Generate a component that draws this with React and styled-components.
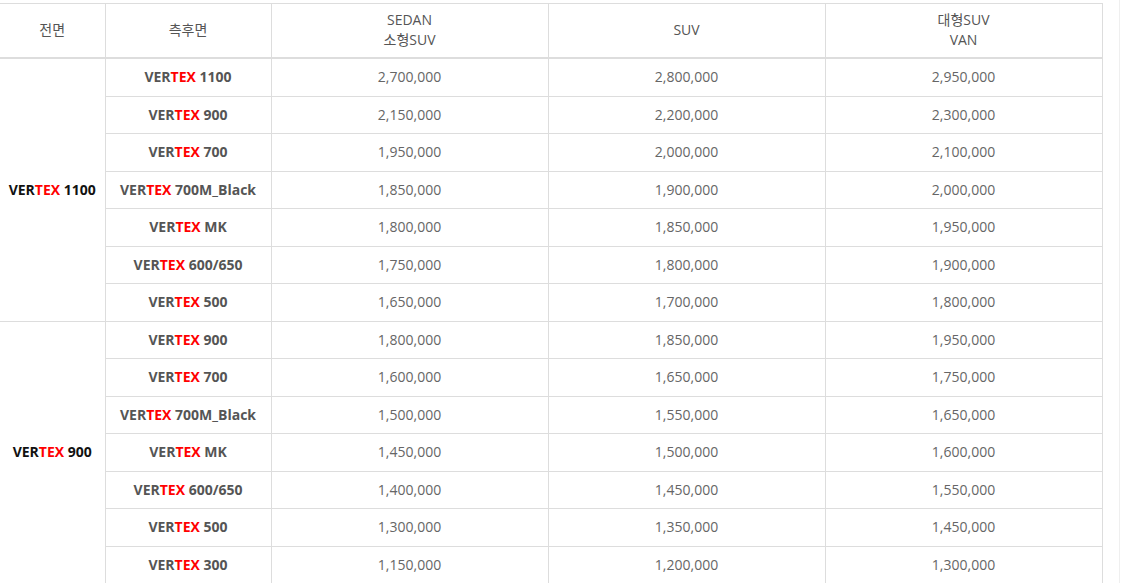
import React from "react";
import styled, { createGlobalStyle } from "styled-components";

const GlobalStyle = createGlobalStyle`
  body {
    margin: 0;
    background: #fff;
    font-family: "Open Sans", "Noto Sans CJK KR", sans-serif;
  }
`;

const Page = styled.div`
  width: 1120px;
  height: 583px;
  padding-top: 3px;
  box-sizing: border-box;
  border-right: 1px solid #efefef;
  overflow: hidden;
`;

const Table = styled.table`
  width: 1102px;
  border-collapse: collapse;
  table-layout: fixed;
  font-size: 14px;
`;

const Th = styled.th`
  font-weight: normal;
  color: #555;
  padding: 6px 0 7px;
  line-height: 20px;
  height: 40px;
  border-top: 1px solid #ddd;
  border-bottom: 2px solid #ddd;
  border-left: ${(p) => (p.$first ? "none" : "1px solid #ddd")};
  border-right: 1px solid #ddd;
  text-align: center;
`;

const Td = styled.td`
  padding: 8px 0;
  line-height: 20.5px;
  text-align: center;
  color: #666;
  border-bottom: 1px solid #ddd;
  border-right: 1px solid #ddd;
  white-space: nowrap;
`;

const FrontCell = styled(Td)`
  font-weight: bold;
  color: #111;
`;

const ModelCell = styled(Td)`
  font-weight: bold;
  color: #555;
`;

const Red = styled.span`
  color: #f00;
`;

const Model = ({ name }) => (
  <>
    VER<Red>TEX</Red> {name}
  </>
);

const groups = [
  {
    front: "1100",
    rows: [
      ["1100", "2,700,000", "2,800,000", "2,950,000"],
      ["900", "2,150,000", "2,200,000", "2,300,000"],
      ["700", "1,950,000", "2,000,000", "2,100,000"],
      ["700M_Black", "1,850,000", "1,900,000", "2,000,000"],
      ["MK", "1,800,000", "1,850,000", "1,950,000"],
      ["600/650", "1,750,000", "1,800,000", "1,900,000"],
      ["500", "1,650,000", "1,700,000", "1,800,000"],
    ],
  },
  {
    front: "900",
    rows: [
      ["900", "1,800,000", "1,850,000", "1,950,000"],
      ["700", "1,600,000", "1,650,000", "1,750,000"],
      ["700M_Black", "1,500,000", "1,550,000", "1,650,000"],
      ["MK", "1,450,000", "1,500,000", "1,600,000"],
      ["600/650", "1,400,000", "1,450,000", "1,550,000"],
      ["500", "1,300,000", "1,350,000", "1,450,000"],
      ["300", "1,150,000", "1,200,000", "1,300,000"],
    ],
  },
];

export default function App() {
  return (
    <Page>
      <GlobalStyle />
      <Table>
        <colgroup>
          <col style={{ width: 105 }} />
          <col style={{ width: 166 }} />
          <col style={{ width: 277 }} />
          <col style={{ width: 277 }} />
          <col style={{ width: 277 }} />
        </colgroup>
        <thead>
          <tr>
            <Th $first>전면</Th>
            <Th>측후면</Th>
            <Th>
              SEDAN
              <br />
              소형SUV
            </Th>
            <Th>SUV</Th>
            <Th>
              대형SUV
              <br />
              VAN
            </Th>
          </tr>
        </thead>
        <tbody>
          {groups.map((g) =>
            g.rows.map((r, i) => (
              <tr key={g.front + i}>
                {i === 0 && (
                  <FrontCell rowSpan={g.rows.length}>
                    <Model name={g.front} />
                  </FrontCell>
                )}
                <ModelCell>
                  <Model name={r[0]} />
                </ModelCell>
                <Td>{r[1]}</Td>
                <Td>{r[2]}</Td>
                <Td>{r[3]}</Td>
              </tr>
            ))
          )}
        </tbody>
      </Table>
    </Page>
  );
}
